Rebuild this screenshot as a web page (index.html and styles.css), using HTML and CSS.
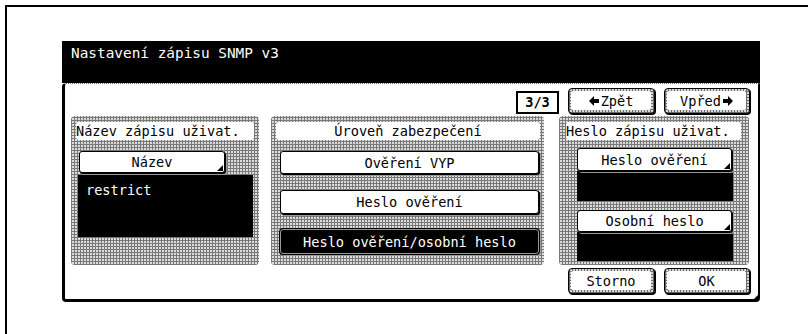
FILE: index.html
```html
<!DOCTYPE html>
<html lang="cs">
<head>
    <meta charset="UTF-8">
    <title>Nastavení zápisu SNMP v3</title>
    <link rel="stylesheet" href="styles.css">
</head>
<body>
<div class="frame">
    <div class="screen">
        <div class="titlebar">Nastavení zápisu SNMP v3</div>
        <div class="panel">
            <div class="toprow">
                <div class="pager">3/3</div>
                <div class="navbtn nav-back"><span>
                    <svg class="arrow" width="10" height="10" viewBox="0 0 10 10"><polygon points="0,5 5,0 5,3 10,3 10,7 5,7 5,10"/></svg>Zpět</span></div>
                <div class="navbtn nav-next"><span>Vpřed<svg class="arrow" width="10" height="10" viewBox="0 0 10 10"><polygon points="10,5 5,0 5,3 0,3 0,7 5,7 5,10"/></svg></span></div>
            </div>

            <div class="groups">
                <!-- Název zápisu -->
                <div class="group group-name">
                    <div class="group-head">Název zápisu uživat.</div>
                    <div class="btn dropdown name-btn">Název</div>
                    <div class="field name-field">restrict</div>
                </div>

                <!-- Úroveň zabezpečení -->
                <div class="group group-level">
                    <div class="group-head center">Úroveň zabezpečení</div>
                    <div class="btn level-btn lvl-1">Ověření VYP</div>
                    <div class="btn level-btn lvl-2">Heslo ověření</div>
                    <div class="btn level-btn lvl-3 selected">Heslo ověření/osobní heslo</div>
                </div>

                <!-- Heslo zápisu -->
                <div class="group group-pass">
                    <div class="group-head">Heslo zápisu uživat.</div>
                    <div class="btn dropdown pass-btn pb-1">Heslo ověření</div>
                    <div class="field pass-field pf-1"></div>
                    <div class="btn dropdown pass-btn pb-2">Osobní heslo</div>
                    <div class="field pass-field pf-2"></div>
                </div>
            </div>

            <div class="bottomrow">
                <div class="navbtn"><span>Storno</span></div>
                <div class="navbtn nav-ok"><span>OK</span></div>
            </div>
        </div>
    </div>
</div>
</body>
</html>
```

FILE: styles.css
```css
/* Global */
body {
    margin: 0;
    padding: 0;
    background: #fff;
    font-family: 'DejaVu Sans Mono', 'Liberation Mono', monospace;
    font-size: 13.6px;
    color: #000;
    overflow: hidden;
}

.frame {
    margin: 5px 0 0 5px;
    border-top: 2px solid #000;
    border-left: 2px solid #000;
    height: calc(100vh - 5px);
    box-sizing: border-box;
    padding: 34px 0 0 55px;
}

.screen {
    width: 698px;
}

.titlebar {
    height: 42px;
    box-sizing: border-box;
    background: #000;
    color: #fff;
    font-size: 14.4px;
    line-height: 17px;
    padding: 4px 9px 0;
}

/* Panel */
.panel {
    position: relative;
    height: 219px;
    box-sizing: border-box;
    background: #fff;
    border-top: 1px dotted #666;
    border-left: 3px solid #000;
    border-right: 2px solid #000;
    border-bottom: 3px solid #000;
    border-radius: 4px 0 4px 4px;
    padding: 4px 8px 5px 6px;
    display: flex;
    flex-direction: column;
}

.panel::after {
    content: '';
    position: absolute;
    right: 0;
    bottom: 0;
    border-left: 4px solid transparent;
    border-bottom: 4px solid #000;
}

.toprow, .bottomrow {
    display: flex;
    justify-content: flex-end;
    align-items: center;
    gap: 9px;
    height: 26px;
}

.bottomrow {
    margin-top: 3px;
}

.pager {
    width: 43px;
    height: 23px;
    box-sizing: border-box;
    border: 2px solid #000;
    font-weight: bold;
    text-align: center;
    line-height: 19px;
    margin-top: 2px;
}

/* Nav buttons: black outline, grey dotted band, white face */
.navbtn {
    width: 87px;
    height: 26px;
    box-sizing: border-box;
    border: 1px solid #000;
    border-radius: 4px;
    padding: 2px 3px 3px 2px;
    background-color: #d8d8d8;
    background-image:
        repeating-linear-gradient(0deg, #6a6a6a 0 1px, transparent 1px 3px),
        repeating-linear-gradient(90deg, #6a6a6a 0 1px, transparent 1px 3px);
    box-shadow: 1px 1px 0 #000;
}

.navbtn + .navbtn {
    width: 86px;
}

.navbtn span {
    display: flex;
    align-items: center;
    justify-content: center;
    gap: 2px;
    height: 100%;
    background: #fff;
    border-radius: 2px;
    line-height: 18px;
}

.arrow {
    display: block;
}

/* Groups */
.groups {
    display: flex;
    gap: 12px;
    margin-top: 2px;
    height: 149px;
}

.group {
    border-radius: 4px;
    background-color: #dcdcdc;
    background-image:
        repeating-linear-gradient(0deg, #787878 0 1px, transparent 1px 3px),
        repeating-linear-gradient(90deg, #787878 0 1px, transparent 1px 3px);
    display: flex;
    flex-direction: column;
    align-items: flex-start;
}

.group-name { width: 188px; }
.group-level { width: 273px; }
.group-pass { width: 190px; margin-left: 3px; }

.group-head {
    margin: 6px 0 0 5px;
    height: 18px;
    background: #fff;
    border-radius: 3px;
    line-height: 18px;
    white-space: nowrap;
}

.group-name .group-head { width: 178px; }
.group-level .group-head { width: 264px; }
.group-pass .group-head { width: 175px; margin-left: 7px; }

.center {
    text-align: center;
}

/* Buttons */
.btn {
    position: relative;
    box-sizing: border-box;
    background: #fff;
    border: 1px solid #000;
    border-radius: 3px;
    box-shadow: 1px 1px 0 #000, 2px 2px 0 #9a9a9a;
    text-align: center;
    display: flex;
    align-items: center;
    justify-content: center;
}

.dropdown::after {
    content: '';
    position: absolute;
    right: 1px;
    bottom: 1px;
    border-left: 6px solid transparent;
    border-bottom: 6px solid #000;
}

.name-btn {
    margin: 11px 0 0 8px;
    width: 146px;
    height: 22px;
}

.field {
    background: #000;
    color: #fff;
    box-sizing: border-box;
}

.name-field {
    margin: 2px 0 0 7px;
    width: 175px;
    height: 62px;
    padding: 7px 8px;
    line-height: 16px;
}

.level-btn {
    margin-left: 9px;
    width: 259px;
}

.lvl-1 { margin-top: 11px; height: 23px; }
.lvl-2 { margin-top: 16px; height: 24px; }
.lvl-3 { margin-top: 15px; height: 25px; }

.selected {
    background: #000;
    color: #fff;
    border: 1px solid #999;
    box-shadow: 0 0 0 1px #000, 2px 2px 0 #9a9a9a;
}

.pass-btn {
    margin-left: 18px;
    width: 155px;
}

.pb-1 { margin-top: 8px; height: 23px; }
.pb-2 { margin-top: 9px; height: 22px; }

.pass-field {
    margin-left: 18px;
    width: 156px;
}

.pf-1 { height: 30px; }
.pf-2 { height: 29px; }
```
